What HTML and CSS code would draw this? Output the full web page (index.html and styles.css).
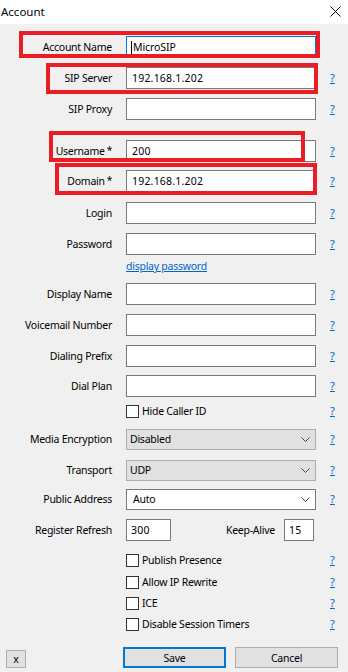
FILE: index.html
```html
<!DOCTYPE html>
<html>
<head>
<meta charset="utf-8">
<link rel="stylesheet" href="styles.css">
</head>
<body>
<div class="dialog">
  <div class="titlebar">
    <span class="title">Account</span>
    <svg class="close" width="11" height="11" viewBox="0 0 11 11"><path d="M0.5 0.5 L10.5 10.5 M10.5 0.5 L0.5 10.5" stroke="#000" stroke-width="1" fill="none"/></svg>
  </div>

  <div class="form">
    <div class="row r-input mt12">
      <label class="lbl">Account Name</label>
      <div class="field focused"><span class="caret"></span>MicroSIP</div>
      <span></span>
    </div>
    <div class="row r-input mt9">
      <label class="lbl">SIP Server</label>
      <div class="field">192.168.1.202</div>
      <a class="help">?</a>
    </div>
    <div class="row r-input mt9">
      <label class="lbl">SIP Proxy</label>
      <div class="field"></div>
      <a class="help">?</a>
    </div>
    <div class="row r-input mt20">
      <label class="lbl">Username<span class="req">*</span></label>
      <div class="field">200</div>
      <a class="help">?</a>
    </div>
    <div class="row r-input mt8">
      <label class="lbl">Domain<span class="req">*</span></label>
      <div class="field">192.168.1.202</div>
      <a class="help">?</a>
    </div>
    <div class="row r-input mt10">
      <label class="lbl">Login</label>
      <div class="field"></div>
      <a class="help">?</a>
    </div>
    <div class="row r-input mt9">
      <label class="lbl">Password</label>
      <div class="field"></div>
      <a class="help">?</a>
    </div>
    <div class="row r-link mt4">
      <span></span>
      <a class="link">display password</a>
      <span></span>
    </div>
    <div class="row r-input mt10">
      <label class="lbl">Display Name</label>
      <div class="field"></div>
      <a class="help">?</a>
    </div>
    <div class="row r-input mt9">
      <label class="lbl">Voicemail Number</label>
      <div class="field"></div>
      <a class="help">?</a>
    </div>
    <div class="row r-input mt9">
      <label class="lbl">Dialing Prefix</label>
      <div class="field"></div>
      <a class="help">?</a>
    </div>
    <div class="row r-input mt8">
      <label class="lbl">Dial Plan</label>
      <div class="field"></div>
      <a class="help">?</a>
    </div>
    <div class="row r-check mt7">
      <span></span>
      <div class="check"><span class="box"></span>Hide Caller ID</div>
      <a class="help">?</a>
    </div>
    <div class="row r-select mt11">
      <label class="lbl">Media Encryption</label>
      <div class="select grey"><span>Disabled</span><svg width="9" height="5" viewBox="0 0 9 5"><path d="M0.5 0.5 L4.5 4.5 L8.5 0.5" stroke="#444" fill="none"/></svg></div>
      <a class="help">?</a>
    </div>
    <div class="row r-select mt10">
      <label class="lbl">Transport</label>
      <div class="select grey"><span>UDP</span><svg width="9" height="5" viewBox="0 0 9 5"><path d="M0.5 0.5 L4.5 4.5 L8.5 0.5" stroke="#444" fill="none"/></svg></div>
      <a class="help">?</a>
    </div>
    <div class="row r-select mt8">
      <label class="lbl">Public Address</label>
      <div class="select white"><span>Auto</span><svg width="9" height="5" viewBox="0 0 9 5"><path d="M0.5 0.5 L4.5 4.5 L8.5 0.5" stroke="#444" fill="none"/></svg></div>
      <a class="help">?</a>
    </div>
    <div class="row r-input mt10">
      <label class="lbl">Register Refresh</label>
      <div class="pair">
        <div class="field small">300</div>
        <label class="lbl2">Keep-Alive</label>
        <div class="field tiny">15</div>
      </div>
      <span></span>
    </div>
    <div class="row r-check mt12">
      <span></span>
      <div class="check"><span class="box"></span>Publish Presence</div>
      <a class="help">?</a>
    </div>
    <div class="row r-check mt9">
      <span></span>
      <div class="check"><span class="box"></span>Allow IP Rewrite</div>
      <a class="help">?</a>
    </div>
    <div class="row r-check mt8">
      <span></span>
      <div class="check"><span class="box"></span>ICE</div>
      <a class="help">?</a>
    </div>
    <div class="row r-check mt8">
      <span></span>
      <div class="check"><span class="box"></span>Disable Session Timers</div>
      <a class="help">?</a>
    </div>

    <div class="buttons">
      <button class="btn btn-x">x</button>
      <div class="btn-group">
        <button class="btn btn-main default">Save</button>
        <button class="btn btn-main">Cancel</button>
      </div>
    </div>
  </div>

  <div class="mark mark-account"></div>
  <div class="mark mark-server"></div>
  <div class="mark mark-user"></div>
  <div class="mark mark-domain"></div>
</div>
</body>
</html>
```

FILE: styles.css
```css
html, body {
  margin: 0;
  padding: 0;
}
body {
  background: #f0f0f0;
  font-family: "Noto Sans", "Open Sans", sans-serif;
  font-size: 10.5px;
  letter-spacing: -0.25px;
  color: #000;
  width: 348px;
  height: 672px;
  overflow: hidden;
}
.dialog {
  position: relative;
  width: 348px;
  height: 672px;
}
.titlebar {
  height: 24px;
  background: #fff;
  display: flex;
  align-items: center;
  justify-content: space-between;
  padding: 0 7px 0 1px;
  box-sizing: border-box;
}
.title {
  font-size: 11.5px;
  letter-spacing: 0;
  margin-top: -1px;
}
.close {
  display: block;
  margin-top: -1px;
}
.form {
  display: flex;
  flex-direction: column;
}
.row {
  display: grid;
  grid-template-columns: 112px 190px 18px;
  column-gap: 14px;
  align-items: center;
}
.r-input { height: 22px; }
.r-select { height: 21px; }
.r-check { height: 13px; }
.r-link { height: 14px; }

.mt4 { margin-top: 4px; }
.mt7 { margin-top: 7px; }
.mt8 { margin-top: 8px; }
.mt9 { margin-top: 9px; }
.mt10 { margin-top: 10px; }
.mt11 { margin-top: 11px; }
.mt12 { margin-top: 12px; }
.mt20 { margin-top: 20px; }

.lbl {
  text-align: right;
  white-space: nowrap;
  line-height: 22px;
}
.req {
  font-size: 10px;
  margin-left: 2px;
  position: relative;
  top: -1px;
}
.field {
  height: 22px;
  box-sizing: border-box;
  border: 1px solid #7a7a7a;
  background: #fff;
  padding-left: 5px;
  display: flex;
  align-items: center;
  white-space: nowrap;
  letter-spacing: 0.2px;
}
.field.focused {
  border-color: #0078d7;
  padding-left: 4px;
  letter-spacing: -0.1px;
}
.caret {
  display: inline-block;
  width: 1px;
  height: 13px;
  background: #000;
  margin-right: 1px;
}
.help {
  color: #0066cc;
  text-decoration: underline;
  font-size: 11px;
  letter-spacing: 0;
  line-height: 14px;
}
.link {
  color: #0066cc;
  text-decoration: underline;
  line-height: 14px;
  white-space: nowrap;
}
.check {
  display: flex;
  align-items: center;
  white-space: nowrap;
  height: 13px;
}
.box {
  width: 13px;
  height: 13px;
  box-sizing: border-box;
  border: 1px solid #333;
  background: #fff;
  margin-right: 3px;
  flex: none;
}
.select {
  height: 21px;
  box-sizing: border-box;
  display: flex;
  align-items: center;
  justify-content: space-between;
  padding: 0 5px 0 3px;
}
.select.grey {
  background: #e1e1e1;
  border: 1px solid #adadad;
}
.select.white {
  background: #fff;
  border: 1px solid #7a7a7a;
  padding-left: 6px;
}
.select svg {
  display: block;
  margin-top: 1px;
}
.pair {
  display: flex;
  align-items: center;
  height: 22px;
  padding-right: 2px;
}
.field.small { width: 45px; padding-left: 4px; }
.field.tiny { width: 30px; padding-left: 4px; }
.lbl2 {
  margin-left: auto;
  margin-right: 9px;
  white-space: nowrap;
}
.buttons {
  margin-top: 17px;
  height: 21px;
  display: flex;
  justify-content: space-between;
  align-items: flex-end;
  padding: 0 10px 0 6px;
}
.btn {
  font-family: inherit;
  font-size: 10.5px;
  letter-spacing: -0.25px;
  color: #000;
  background: #e1e1e1;
  border: 1px solid #adadad;
  padding: 0;
  margin: 0;
  box-sizing: border-box;
}
.btn-x {
  width: 20px;
  height: 18px;
  line-height: 14px;
}
.btn-group {
  display: flex;
  gap: 9px;
}
.btn-main {
  width: 103px;
  height: 21px;
}
.btn-main.default {
  border: 2px solid #0078d7;
}
.mark {
  position: absolute;
  border: 4px solid #ec1c24;
  box-sizing: border-box;
  pointer-events: none;
}
.mark-account { left: 19px; top: 31px; width: 301px; height: 27px; }
.mark-server { left: 46px; top: 63px; width: 272px; height: 31px; }
.mark-user { left: 49px; top: 131px; width: 256px; height: 31px; }
.mark-domain { left: 55px; top: 163px; width: 262px; height: 32px; }
```
